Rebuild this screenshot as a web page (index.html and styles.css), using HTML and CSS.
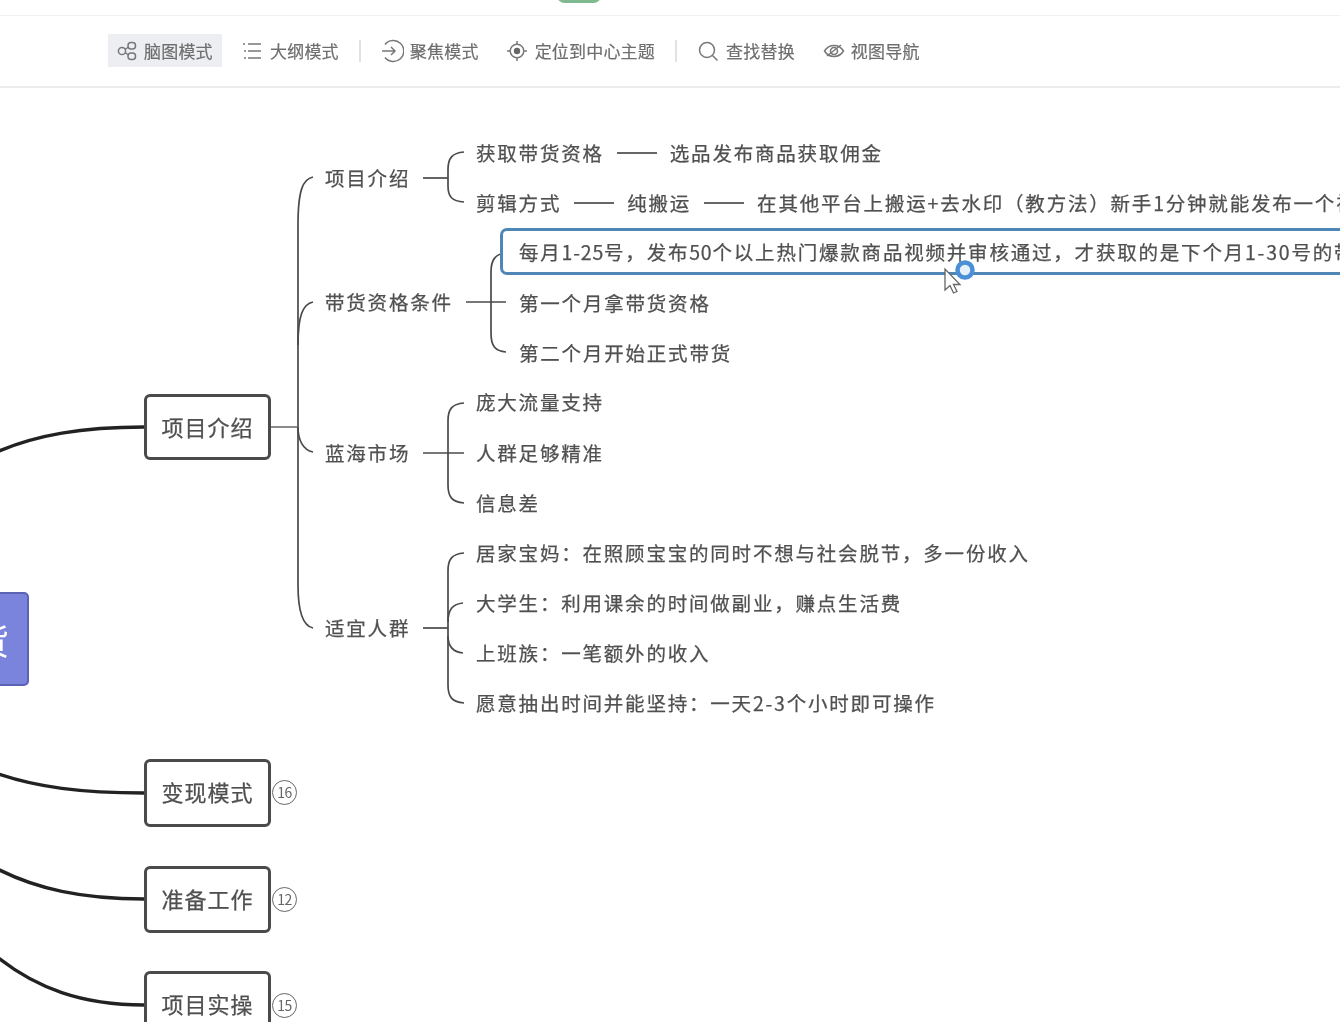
FILE: index.html
```html
<!DOCTYPE html>
<html lang="zh-CN">
<head>
<meta charset="utf-8">
<title>脑图</title>
<link rel="stylesheet" href="styles.css">
</head>
<body>
<div class="app">
  <header class="topbar"><span class="pill"></span></header>
  <nav class="toolbar">
    <div class="tool active">
      <svg class="ico" viewBox="0 0 22 22"><circle cx="5" cy="11" r="3.6"/><rect x="11" y="2.5" width="7.5" height="6.5" rx="3"/><rect x="11" y="13" width="7.5" height="6.5" rx="3"/><path d="M8 9.5 11.5 7M8 12.5l3.500 2.500"/></svg>
      <span>脑图模式</span>
    </div>
    <div class="tool outline">
      <svg class="ico" viewBox="0 0 22 22"><path d="M6 4h13M6 11h13M6 18h13" /><path class="dash" d="M1 4h2M2 11h2M2 18h2"/></svg>
      <span>大纲模式</span>
    </div>
    <i class="sep sep-a"></i>
    <div class="tool focus">
      <svg class="ico wide" viewBox="0 0 24 24"><path d="M5 5.500A10.500 10.500 0 1 1 5 18.500"/><path d="M2 12h13M11 8l4 4-4 4"/></svg>
      <span>聚焦模式</span>
    </div>
    <div class="tool locate">
      <svg class="ico" viewBox="0 0 22 22"><circle cx="11" cy="11" r="6.800"/><circle class="solid" cx="11" cy="11" r="3.200"/><path d="M11 1v3M11 18v3M1 11h3M18 11h3"/></svg>
      <span>定位到中心主题</span>
    </div>
    <i class="sep sep-b"></i>
    <div class="tool find">
      <svg class="ico" viewBox="0 0 22 22"><circle cx="10" cy="10" r="7.500"/><path d="m15.500 15.500 5 5"/></svg>
      <span>查找替换</span>
    </div>
    <div class="tool view">
      <svg class="ico" viewBox="0 0 22 22"><path d="M1.500 11C4 7 7 5.500 11 5.500S18 7 20.500 11C18 15 15 16.500 11 16.500S4 15 1.500 11Z"/><circle cx="11" cy="11" r="3.500"/><path d="M4 16 18 5"/></svg>
      <span>视图导航</span>
    </div>
  </nav>

  <main class="canvas">
    <svg class="links" width="1340" height="1022" viewBox="0 0 1340 1022">
      <g class="thick">
        <path d="M-10 455C35 434 85 427 144 427"/>
        <path d="M-10 771C35 788 85 793 144 793"/>
        <path d="M-10 865C35 890 85 899 144 899"/>
        <path d="M-10 951C35 990 85 1005 144 1005"/>
      </g>
      <g class="thin">
        <path class="pale" d="M271 427H297"/>
        <path d="M313 177C303 179 298 190 298 225V585C298 612 303 626 313 628"/>
        <path d="M313 302C303 304 298 315 298 345"/>
        <path d="M298 427C298 440 303 450 313 452"/>
        <path d="M423 178H448"/>
        <path d="M464 152C452 153 448 158 448 170V186C448 197 452 201 464 202"/>
        <path d="M466 302H506"/>
        <path d="M506 253C495 254 491 260 491 272V333C491 346 495 351 506 352"/>
        <path d="M423 453H464"/>
        <path d="M464 403C452 404 448 409 448 421V485C448 497 452 502 464 503"/>
        <path d="M423 628H448"/>
        <path d="M464 553C452 554 448 559 448 571V685C448 697 452 702 464 703"/>
        <path d="M463 603C453 604 448 609 448 622"/>
        <path d="M448 636C448 647 453 652 463 653"/>
      </g>
    </svg>

    <div class="root"><span>货</span></div>

    <div class="topic t1">项目介绍</div>
    <div class="topic t2">变现模式</div><span class="badge b2">16</span>
    <div class="topic t3">准备工作</div><span class="badge b3">12</span>
    <div class="topic t4">项目实操</div><span class="badge b4">15</span>

    <div class="sub s1">项目介绍</div>
    <div class="sub s2">带货资格条件</div>
    <div class="sub s3">蓝海市场</div>
    <div class="sub s4">适宜人群</div>

    <div class="sub row r1"><span>获取带货资格</span><i class="dash-link"></i><span>选品发布商品获取佣金</span></div>
    <div class="sub row r2"><span>剪辑方式</span><i class="dash-link"></i><span>纯搬运</span><i class="dash-link"></i><span>在其他平台上搬运+去水印（教方法）新手1分钟就能发布一个视频</span></div>

    <div class="selected"><span class="sub-text">每月<span class="num">1-25</span>号，发布<span class="num">50</span>个以上热门爆款商品视频并审核通过，才获取的是下个月1-30号的带货资格</span></div>
    <div class="sub r4">第一个月拿带货资格</div>
    <div class="sub r5">第二个月开始正式带货</div>

    <div class="sub r6">庞大流量支持</div>
    <div class="sub r7">人群足够精准</div>
    <div class="sub r8">信息差</div>

    <div class="sub r9">居家宝妈：在照顾宝宝的同时不想与社会脱节，多一份收入</div>
    <div class="sub r10">大学生：利用课余的时间做副业，赚点生活费</div>
    <div class="sub r11">上班族：一笔额外的收入</div>
    <div class="sub r12">愿意抽出时间并能坚持：一天2-3个小时即可操作</div>

    <svg class="pointer" width="44" height="36" viewBox="0 0 44 36">
      <circle class="ring" cx="24" cy="10" r="7.500"/>
      <path class="arrow" d="M4 9V30L9 25.500 12.500 33 16 31.500 12.500 24.500H19Z"/>
    </svg>
  </main>
</div>
</body>
</html>
```
FILE: styles.css
```css
html, body {
  margin: 0;
  height: 1022px;
  overflow: hidden;
  background: #fff;
}
.app {
  width: 1340px;
  height: 1022px;
  position: relative;
  overflow: hidden;
  display: flex;
  flex-direction: column;
  font-family: "Noto Sans CJK SC", "Liberation Sans", sans-serif;
  background: #fff;
  filter: blur(0.5px);
}
.topbar {
  height: 15px;
  flex: none;
  border-bottom: 1px solid #f0f0f0;
  position: relative;
}
.pill {
  position: absolute;
  left: 557px;
  top: -12px;
  width: 44px;
  height: 15px;
  border-radius: 8px;
  background: #7fb98f;
}
.toolbar {
  height: 72px;
  flex: none;
  display: flex;
  align-items: center;
  padding: 0 0 1px 108px;
  border-bottom: 2px solid #ececec;
  box-sizing: border-box;
  color: #6e6e6e;
  font-size: 17px;
  letter-spacing: 0.2px;
  -webkit-text-stroke: 0.2px #6e6e6e;
}
.tool {
  display: flex;
  align-items: center;
  gap: 6px;
  height: 33px;
  flex: none;
  white-space: nowrap;
}
.tool.active {
  background: #eceef1;
  padding: 0 0 0 9px;
  width: 114px;
  box-sizing: border-box;
  gap: 5px;
}
.outline { margin-left: 20px; }
.focus { margin-left: 0; }
.locate { margin-left: 27px; gap: 7px; }
.find { margin-left: 0; gap: 7px; }
.view { margin-left: 28px; }
.ico {
  width: 22px;
  height: 22px;
  fill: none;
  stroke: #777;
  stroke-width: 1.5;
  flex: none;
}
.ico.wide { width: 24px; height: 24px; }
.ico .solid { fill: #666; stroke: none; }
.ico .dash { stroke-width: 1.5; }
.sep {
  display: block;
  width: 2px;
  height: 22px;
  background: #e2e2e2;
  flex: none;
}
.sep-a { margin: 0 19px 0 20px; }
.sep-b { margin: 0 20px 0 20px; }

.canvas {
  position: relative;
  flex: 1;
  min-height: 0;
  margin-top: -88px;
  z-index: -1;
}
.links {
  position: absolute;
  left: 0;
  top: 0;
  fill: none;
}
.thick path { stroke: #222; stroke-width: 3.4; }
.thin path { stroke: #4a4a4a; stroke-width: 1.7; }
.thin .pale { stroke: #777; }

.root {
  position: absolute;
  left: -120px;
  top: 592px;
  width: 149px;
  height: 94px;
  box-sizing: border-box;
  background: #7b84dc;
  border: 2px solid #5b63b4;
  border-radius: 5px;
  color: #fff;
  font-size: 36px;
  line-height: 90px;
  text-align: right;
  padding-right: 18px;
}
.topic {
  position: absolute;
  left: 144px;
  width: 127px;
  height: 67px;
  box-sizing: border-box;
  border: 3px solid #4a4a4a;
  border-radius: 6px;
  background: #fff;
  color: #4f4f4f;
  font-size: 22px;
  letter-spacing: 1px;
  line-height: 58px;
  text-align: center;
  -webkit-text-stroke: 0.25px #4f4f4f;
}
.t1 { top: 394px; height: 66px; }
.t2 { top: 759px; height: 68px; }
.t3 { top: 866px; }
.t4 { top: 971px; height: 70px; }
.badge {
  position: absolute;
  left: 272px;
  width: 25px;
  height: 25px;
  box-sizing: border-box;
  border: 1.5px solid #666;
  border-radius: 50%;
  color: #666;
  font-size: 14px;
  line-height: 22px;
  text-align: center;
  letter-spacing: -0.5px;
}
.b2 { top: 780px; }
.b3 { top: 887px; }
.b4 { top: 993px; }

.sub, .sub-text {
  color: #505050;
  font-size: 19.5px;
  letter-spacing: 1.8px;
  line-height: 28px;
  white-space: nowrap;
  -webkit-text-stroke: 0.25px #505050;
}
.sub { position: absolute; }
.num { letter-spacing: 0.8px; }
.s1 { left: 325px; top: 164px; }
.s2 { left: 325px; top: 288px; }
.s3 { left: 325px; top: 439px; }
.s4 { left: 325px; top: 614px; }
.row {
  display: flex;
  align-items: center;
  gap: 13px;
}
.dash-link {
  display: block;
  width: 40px;
  height: 2px;
  background: #666;
  flex: none;
}
.r1 { left: 476px; top: 139px; }
.r2 { left: 476px; top: 189px; }
.selected {
  position: absolute;
  left: 500px;
  top: 228px;
  width: 900px;
  height: 47px;
  box-sizing: border-box;
  border: 3px solid #4f86b5;
  border-radius: 7px;
  background: #fff;
  padding: 7px 0 0 16px;
}
.sub-text { display: block; }
.r4 { left: 519px; top: 289px; }
.r5 { left: 519px; top: 339px; }
.r6 { left: 476px; top: 388px; }
.r7 { left: 476px; top: 439px; }
.r8 { left: 476px; top: 489px; }
.r9 { left: 476px; top: 539px; }
.r10 { left: 476px; top: 589px; }
.r11 { left: 476px; top: 639px; }
.r12 { left: 476px; top: 689px; }

.pointer {
  position: absolute;
  left: 941px;
  top: 260px;
}
.ring { fill: #e6f0fa; stroke: #4b8fd6; stroke-width: 4.500; }
.arrow { fill: #fff; stroke: #666; stroke-width: 1.300; }
```
